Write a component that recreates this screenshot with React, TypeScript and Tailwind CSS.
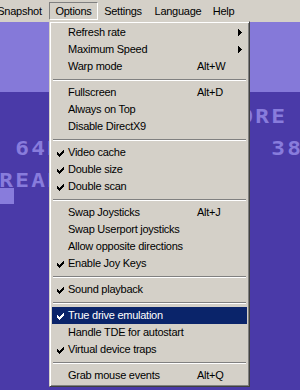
import React from "react"

type MenuEntry =
  | { kind: "sep" }
  | {
      kind: "item"
      label: string
      checked?: boolean
      shortcut?: string
      submenu?: boolean
      active?: boolean
    }

const optionsMenu: MenuEntry[] = [
  { kind: "item", label: "Refresh rate", submenu: true },
  { kind: "item", label: "Maximum Speed", submenu: true },
  { kind: "item", label: "Warp mode", shortcut: "Alt+W" },
  { kind: "sep" },
  { kind: "item", label: "Fullscreen", shortcut: "Alt+D" },
  { kind: "item", label: "Always on Top" },
  { kind: "item", label: "Disable DirectX9" },
  { kind: "sep" },
  { kind: "item", label: "Video cache", checked: true },
  { kind: "item", label: "Double size", checked: true },
  { kind: "item", label: "Double scan", checked: true },
  { kind: "sep" },
  { kind: "item", label: "Swap Joysticks", shortcut: "Alt+J" },
  { kind: "item", label: "Swap Userport joysticks" },
  { kind: "item", label: "Allow opposite directions" },
  { kind: "item", label: "Enable Joy Keys", checked: true },
  { kind: "sep" },
  { kind: "item", label: "Sound playback", checked: true },
  { kind: "sep" },
  { kind: "item", label: "True drive emulation", checked: true, active: true },
  { kind: "item", label: "Handle TDE for autostart" },
  { kind: "item", label: "Virtual device traps", checked: true },
  { kind: "sep" },
  { kind: "item", label: "Grab mouse events", shortcut: "Alt+Q" },
]

// C64 screen rows, 16px per cell (double size)
const screenRows = [
  "",
  "    **** COMMODORE 64 BASIC V2 ****",
  "",
  " 64K RAM SYSTEM  38911 BASIC BYTES FREE",
  "",
  "READY.",
]

function CheckMark({ color }: { color: string }) {
  return (
    <svg width="7" height="7" viewBox="0 0 7 7" shapeRendering="crispEdges" fill={color}>
      <path d="M6 0h1v1h-1zM5 1h2v1h-2zM0 2h1v1h-1zM4 2h3v1h-3zM0 3h2v1h-2zM3 3h3v1h-3zM0 4h5v1h-5zM1 5h3v1h-3zM2 6h1v1h-1z" />
    </svg>
  )
}

function SubArrow() {
  return (
    <svg width="4" height="7" viewBox="0 0 4 7" shapeRendering="crispEdges" fill="#000">
      <path d="M0 0h1v7h-1zM1 1h1v5h-1zM2 2h1v3h-1zM3 3h1v1h-1z" />
    </svg>
  )
}

function MenuBar() {
  return (
    <div className="flex h-[22px] items-start bg-[#d4d0c8] pt-[2px] text-black">
      <div className="-ml-[10px] h-[18px] w-[59px] pt-px text-center leading-[17px]">Snapshot</div>
      <div className="h-[18px] w-[49px] border border-t-[#808080] border-l-[#808080] border-r-white border-b-white text-center leading-[17px]">
        Options
      </div>
      <div className="h-[18px] w-[50px] pt-px text-center leading-[17px]">Settings</div>
      <div className="h-[18px] w-[60px] pt-px text-center leading-[17px]">Language</div>
      <div className="h-[18px] w-[31px] pt-px text-center leading-[17px]">Help</div>
    </div>
  )
}

function C64Screen() {
  return (
    <div className="flex-1 overflow-hidden bg-[#4a3aa8]">
      <div className="-ml-[2px] flex flex-col font-['DejaVu_Sans_Mono',monospace] text-[19px] font-bold leading-[16px] text-[#887cdc]">
        {screenRows.map((row, i) => (
          <div key={i} className="flex h-[16px] whitespace-pre">
            {row.split("").map((ch, j) => (
              <span key={j} className="w-[16px] shrink-0 scale-x-[1.2] text-center">
                {ch}
              </span>
            ))}
          </div>
        ))}
        <div className="flex h-[16px]">
          <span className="h-[16px] w-[16px] bg-[#887cdc]"></span>
        </div>
      </div>
    </div>
  )
}

function OptionsMenu() {
  return (
    <div className="absolute left-[49px] top-[21px] w-[201px] border border-t-[#d4d0c8] border-l-[#d4d0c8] border-r-[#404040] border-b-[#404040] bg-[#d4d0c8] p-[2px] shadow-[inset_1px_1px_0_#ffffff,inset_-1px_-1px_0_#808080]">
      {optionsMenu.map((entry, i) => {
        if (entry.kind === "sep") {
          return (
            <div key={i} className="flex h-[9px] flex-col justify-center px-px">
              <div className="h-px bg-[#808080]"></div>
              <div className="h-px bg-white"></div>
            </div>
          )
        }
        const fg = entry.active ? "#ffffff" : "#000000"
        return (
          <div
            key={i}
            className={`flex h-[17px] items-center leading-[17px] ${
              entry.active ? "bg-[#0a246a] text-white" : "text-black"
            }`}
          >
            <div className="flex w-[16px] justify-center pt-px">
              {entry.checked && <CheckMark color={fg} />}
            </div>
            <div className="w-[129px] whitespace-nowrap">{entry.label}</div>
            <div className="flex flex-1 items-center">
              {entry.shortcut && <span>{entry.shortcut}</span>}
              {entry.submenu && (
                <span className="ml-[41px] flex">
                  <SubArrow />
                </span>
              )}
            </div>
          </div>
        )
      })}
    </div>
  )
}

export default function App() {
  return (
    <div className="relative flex h-[390px] w-[300px] flex-col overflow-hidden bg-[#8579d9] font-['Liberation_Sans',Arial,sans-serif] text-[11px] tracking-[-0.25px]">
      <MenuBar />
      <div className="h-[70px] bg-[#8579d9]"></div>
      <C64Screen />
      <OptionsMenu />
    </div>
  )
}
